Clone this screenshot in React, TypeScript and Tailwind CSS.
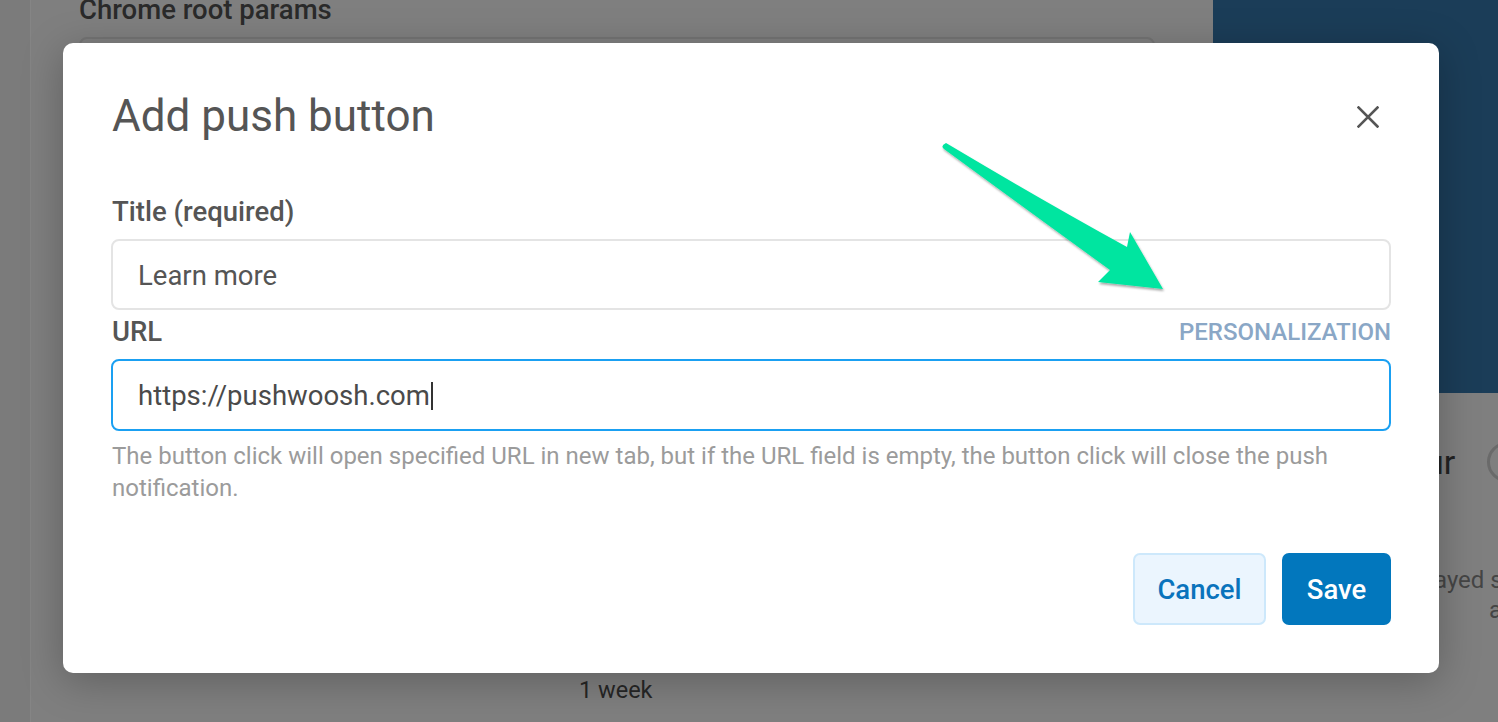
import React from "react";

const font = { fontFamily: "Roboto, 'Noto Sans', sans-serif" } as React.CSSProperties;

function Background() {
  return (
    <div className="flex h-full w-full bg-[#7f7f7f]">
      <div className="h-full w-[31px] shrink-0 border-r border-[#858585] bg-[#7b7b7b]" />
      <div className="flex flex-1">
        <div className="flex w-[1124px] shrink-0 flex-col pl-[48px]">
          <div className="mt-[-5px] shrink-0 text-[27.5px] font-medium leading-[30px] text-[#2a2a2a]">Chrome root params</div>
          <div className="mt-[12px] h-[60px] w-[1076px] shrink-0 rounded-[8px] border-2 border-[#747474]" />
          <div className="mt-[578px] shrink-0 pl-[500px] text-[23.5px] leading-[30px] text-[#262626]">1 week</div>
        </div>
        <div className="ml-[58px] flex flex-1 flex-col">
          <div className="h-[393px] w-full shrink-0 bg-[#1b3d58]" />
          <div className="mt-[49px] flex shrink-0 items-center">
            <span className="ml-[212px] text-[34px] leading-[40px] text-[#222]">ur</span>
            <span className="ml-[32px] h-[40px] w-[40px] shrink-0 rounded-full border-[3px] border-[#6a6a6a]" />
          </div>
          <div className="mt-[82px] shrink-0 pl-[221px] text-[24px] leading-[32px] text-[#454545] whitespace-nowrap">ayed s</div>
          <div className="shrink-0 pl-[276px] text-[24px] leading-[28px] text-[#454545]">a</div>
        </div>
      </div>
    </div>
  );
}

function Arrow() {
  return (
    <svg className="absolute left-[930px] top-[130px]" width="250" height="180" viewBox="930 130 250 180">
      <defs>
        <filter id="sh" x="-20%" y="-20%" width="140%" height="140%">
          <feDropShadow dx="1" dy="2" stdDeviation="1.2" floodColor="#000" floodOpacity="0.35" />
        </filter>
      </defs>
      <path
        d="M946,143 Q1040,199 1127,247 L1130,232 L1163,289 L1098,282 L1110,270 Q1030,212 944,149 Q940,146 946,143 Z"
        fill="#00e5a0"
        filter="url(#sh)"
      />
    </svg>
  );
}

export default function App() {
  return (
    <div className="relative h-[722px] w-[1498px] overflow-hidden" style={font}>
      <Background />
      <div className="absolute left-[63px] top-[43px] flex h-[630px] w-[1376px] flex-col rounded-[10px] bg-white px-[48px] pb-[48px] pt-[47px] shadow-[0_8px_40px_rgba(0,0,0,0.25)]">
        <div className="flex h-[52px] items-center justify-between">
          <div className="ml-[1px] text-[44px] leading-[52px] text-[#555]">Add push button</div>
          <svg className="mr-[12px] mt-[2px]" width="22" height="22" viewBox="0 0 22 22">
            <path d="M1.5 1.5 L20.5 20.5 M20.5 1.5 L1.5 20.5" stroke="#555" strokeWidth="2.6" strokeLinecap="square" />
          </svg>
        </div>
        <div className="ml-[1px] mt-[54px] text-[27.5px] font-medium leading-[32px] text-[#555]">Title (required)</div>
        <div className="mt-[10.5px] flex h-[71px] items-center rounded-[8px] border-2 border-[#e4e4e4] pl-[25px] pt-[3px] text-[27.5px] text-[#555]">
          Learn more
        </div>
        <div className="mt-[6.5px] flex h-[32px] items-center justify-between">
          <div className="ml-[1px] text-[27.5px] font-medium leading-[32px] text-[#555]">URL</div>
          <div className="text-[24px] font-medium leading-[32px] text-[#8aa7c6]">PERSONALIZATION</div>
        </div>
        <div className="mt-[10.5px] flex h-[72px] items-center rounded-[8px] border-2 border-[#1aa0f2] pl-[25px] pt-[2px] text-[27.5px] text-[#4a4a4a]">
          <span>https://pushwoosh.com</span>
          <span className="ml-[1px] h-[28px] w-[2px] bg-[#333]" />
        </div>
        <div className="ml-[1px] mt-[9px] text-[24px] leading-[32px] text-[#9b9b9b]">
          The button click will open specified URL in new tab, but if the URL field is empty, the button click will close the push notification.
        </div>
        <div className="mt-auto flex justify-end gap-[16px]">
          <button className="flex h-[72px] w-[133px] items-center justify-center rounded-[7px] border-2 border-[#cde8fb] bg-[#ebf5fe] pt-[2px] text-[27.5px] font-medium text-[#0a73bc]">
            Cancel
          </button>
          <button className="flex h-[72px] w-[109px] items-center justify-center rounded-[7px] bg-[#0277bd] pt-[2px] text-[27.5px] font-medium text-white">
            Save
          </button>
        </div>
      </div>
      <Arrow />
    </div>
  );
}
